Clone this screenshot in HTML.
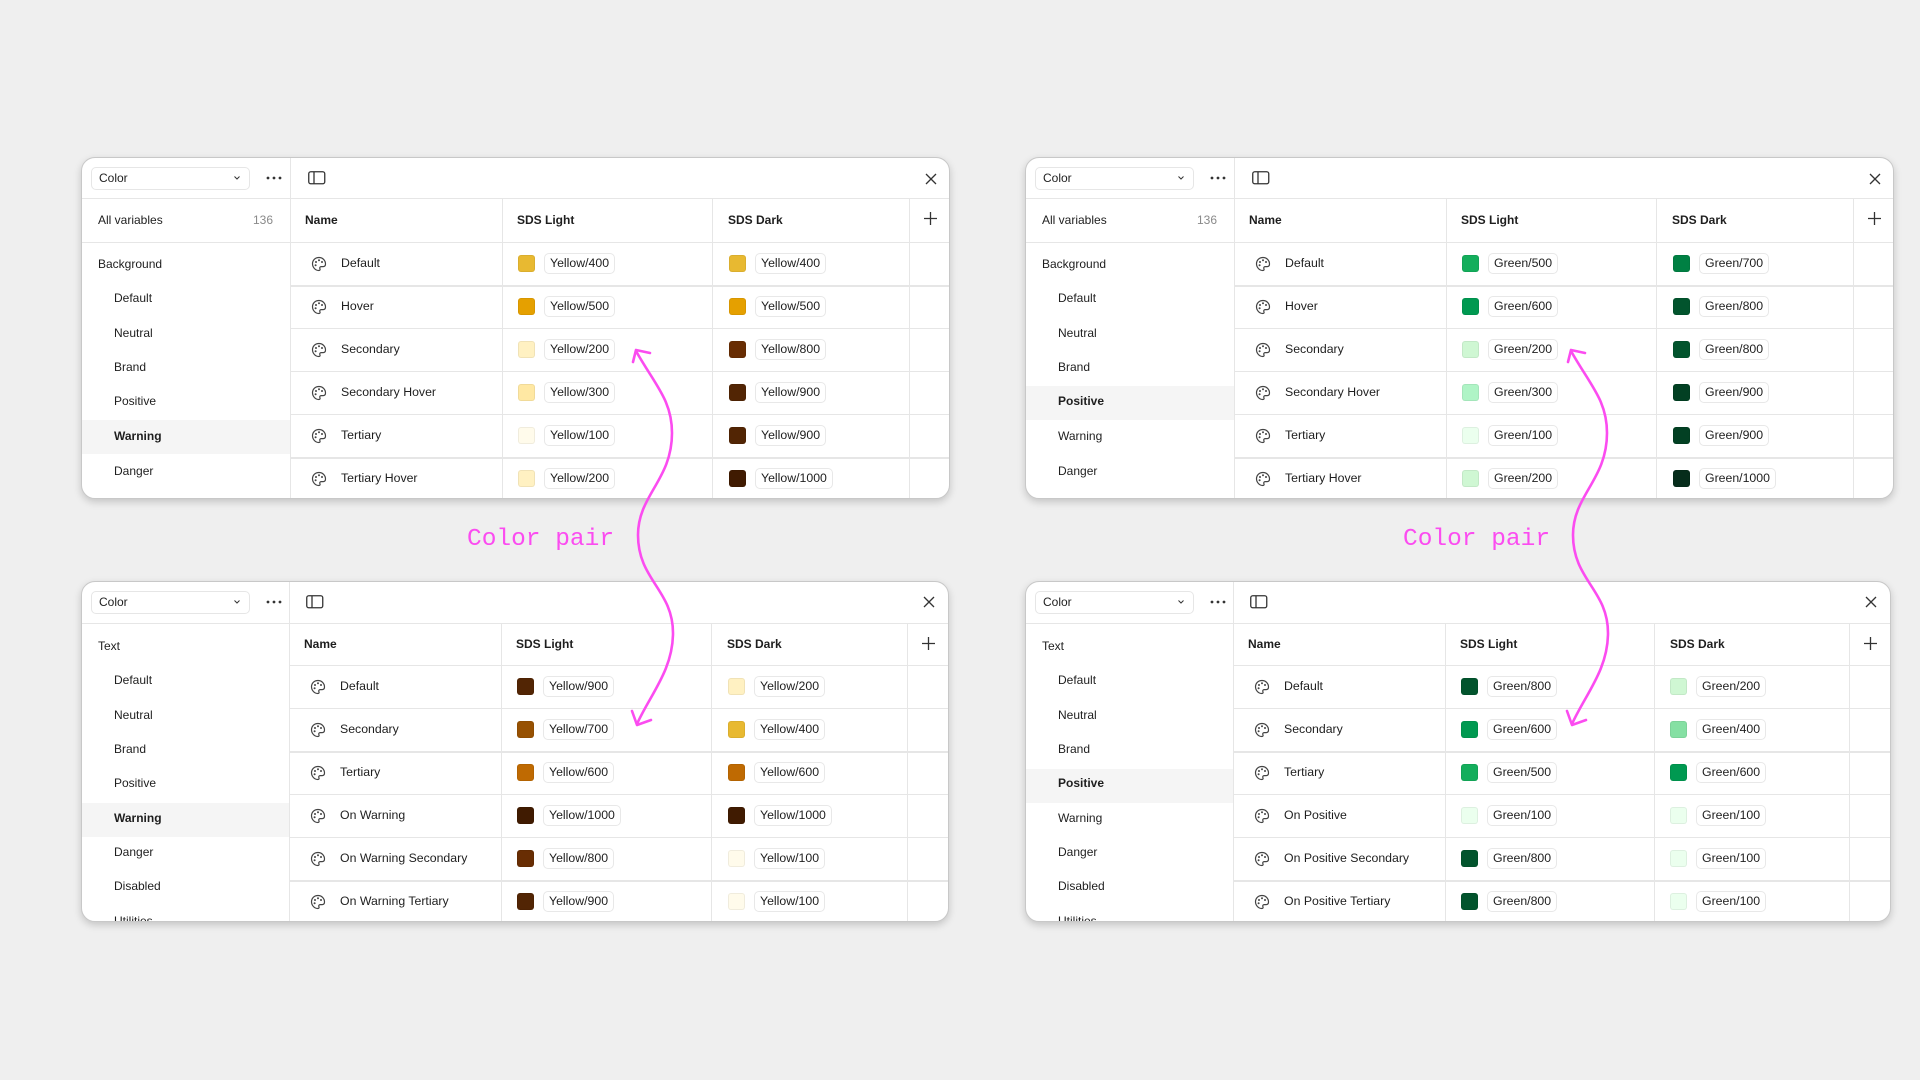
<!DOCTYPE html>
<html><head><meta charset="utf-8">
<style>
*{box-sizing:border-box;margin:0;padding:0}
body{width:1920px;height:1080px;background:#efefef;position:relative;overflow:hidden;font-family:"Liberation Sans",sans-serif;color:#1e1e1e}
.p{position:absolute;width:869px;height:342px;background:#fff;border:1px solid #c8c8c8;border-radius:14px;box-shadow:0 3px 8px rgba(0,0,0,.18);overflow:hidden}
.a{position:absolute}
.hl{position:absolute;left:0;right:0;height:1px;background:#e6e6e6}
.vl{position:absolute;width:1px;background:#e6e6e6}
.dd{position:absolute;left:9px;top:9px;width:159px;height:23px;border:1px solid #e6e6e6;border-radius:5px;font-size:12px;line-height:21px;padding-left:7px}
.dd svg{position:absolute;right:9px;top:8px}
.side{position:absolute;font-size:12px;line-height:14px}
.sel{position:absolute;left:0;width:208px;height:34px;background:#f5f5f5}
.th{position:absolute;font-size:12px;font-weight:bold;line-height:14px}
.row{position:absolute;left:208px;width:661px;height:43px}
.row .ic{position:absolute;left:21px;top:14px}
.row .nm{position:absolute;left:51px;top:14px;font-size:12.3px;line-height:15px}
.sw{position:absolute;top:13px;width:17px;height:17px;border-radius:3px;box-shadow:inset 0 0 0 1px rgba(0,0,0,.06)}
.chip{position:absolute;top:11px;height:21px;border:1px solid #e8e8e8;border-radius:5px;font-size:12.3px;line-height:19px;padding:0 5px}
.cp{position:absolute;font-family:"Liberation Mono",monospace;font-size:24.5px;color:#fb4cf0;line-height:28px}
</style></head><body>

<svg width="0" height="0" style="position:absolute">
<defs>
<symbol id="pal" viewBox="0 0 16 16"><path d="M8 1.5C4.2 1.5 1.5 4.3 1.5 7.8c0 3.6 2.9 6.7 6.3 6.7 1.2 0 1.6-.8 1.1-1.8-.5-1 .1-2.1 1.3-2.1h1.9c1.5 0 2.4-1 2.4-2.6C14.5 4.4 11.7 1.5 8 1.5z" fill="none" stroke="#444" stroke-width="1.2"/><circle cx="5" cy="6" r="1" fill="#444"/><circle cx="8" cy="4.3" r="1" fill="#444"/><circle cx="11" cy="6" r="1" fill="#444"/><circle cx="4.6" cy="9.3" r="1" fill="#444"/></symbol>
</defs></svg>

<!-- ================= TOP LEFT ================= -->
<div class="p" style="left:81px;top:157px">
 <div class="dd">Color<svg width="6" height="4" viewBox="0 0 6 4"><path d="M.5.5l2.5 2.5L5.5.5" fill="none" stroke="#333" stroke-width="1"/></svg></div>
 <svg class="a" style="left:184px;top:18px" width="16" height="4"><circle cx="2" cy="2" r="1.4" fill="#333"/><circle cx="8" cy="2" r="1.4" fill="#333"/><circle cx="14" cy="2" r="1.4" fill="#333"/></svg>
 <svg class="a" style="left:226px;top:13px" width="18" height="14"><rect x=".75" y=".75" width="16" height="12" rx="2" fill="none" stroke="#333" stroke-width="1.3"/><line x1="6" y1="1" x2="6" y2="13" stroke="#333" stroke-width="1.3"/></svg>
 <svg class="a" style="left:843px;top:15px" width="12" height="12"><path d="M1 1l10 10M11 1L1 11" stroke="#333" stroke-width="1.3"/></svg>
 <div class="hl" style="top:40px"></div>
 <div class="vl" style="left:208px;top:0;height:342px"></div>
 <div class="side" style="left:16px;top:55px">All variables</div>
 <div class="side" style="left:171px;top:55px;color:#8a8a8a">136</div>
 <div class="hl" style="top:84px;width:208px"></div>
 <div class="sel" style="top:262px"></div>
 <div class="side" style="left:16px;top:99px">Background</div>
 <div class="side" style="left:32px;top:133px">Default</div>
 <div class="side" style="left:32px;top:168px">Neutral</div>
 <div class="side" style="left:32px;top:202px">Brand</div>
 <div class="side" style="left:32px;top:236px">Positive</div>
 <div class="side" style="left:32px;top:271px;font-weight:bold">Warning</div>
 <div class="side" style="left:32px;top:306px">Danger</div>
 <div class="th" style="left:223px;top:55px">Name</div>
 <div class="th" style="left:435px;top:55px">SDS Light</div>
 <div class="th" style="left:646px;top:55px">SDS Dark</div>
 <svg class="a" style="left:842px;top:54px" width="13" height="13"><path d="M6.5 0v13M0 6.5h13" stroke="#333" stroke-width="1.3"/></svg>
 <div class="vl" style="left:420px;top:41px;height:301px"></div>
 <div class="vl" style="left:630px;top:41px;height:301px"></div>
 <div class="vl" style="left:827px;top:41px;height:301px"></div>
 <div class="hl" style="top:84px;left:208px"></div>
 <div class="hl" style="top:127px;left:208px;height:2px"></div>
 <div class="hl" style="top:170px;left:208px"></div>
 <div class="hl" style="top:213px;left:208px"></div>
 <div class="hl" style="top:256px;left:208px"></div>
 <div class="hl" style="top:299px;left:208px;height:2px"></div>
 <div class="row" style="top:84px"><svg class="ic" width="16" height="16"><use href="#pal"/></svg><div class="nm">Default</div><div class="sw" style="left:228px;background:#e8b931"></div><div class="chip" style="left:254px">Yellow/400</div><div class="sw" style="left:439px;background:#e8b931"></div><div class="chip" style="left:465px">Yellow/400</div></div>
 <div class="row" style="top:127px"><svg class="ic" width="16" height="16"><use href="#pal"/></svg><div class="nm">Hover</div><div class="sw" style="left:228px;background:#e5a000"></div><div class="chip" style="left:254px">Yellow/500</div><div class="sw" style="left:439px;background:#e5a000"></div><div class="chip" style="left:465px">Yellow/500</div></div>
 <div class="row" style="top:170px"><svg class="ic" width="16" height="16"><use href="#pal"/></svg><div class="nm">Secondary</div><div class="sw" style="left:228px;background:#fff1c2"></div><div class="chip" style="left:254px">Yellow/200</div><div class="sw" style="left:439px;background:#682d03"></div><div class="chip" style="left:465px">Yellow/800</div></div>
 <div class="row" style="top:213px"><svg class="ic" width="16" height="16"><use href="#pal"/></svg><div class="nm">Secondary Hover</div><div class="sw" style="left:228px;background:#ffe8a3"></div><div class="chip" style="left:254px">Yellow/300</div><div class="sw" style="left:439px;background:#522504"></div><div class="chip" style="left:465px">Yellow/900</div></div>
 <div class="row" style="top:256px"><svg class="ic" width="16" height="16"><use href="#pal"/></svg><div class="nm">Tertiary</div><div class="sw" style="left:228px;background:#fffbeb"></div><div class="chip" style="left:254px">Yellow/100</div><div class="sw" style="left:439px;background:#522504"></div><div class="chip" style="left:465px">Yellow/900</div></div>
 <div class="row" style="top:299px"><svg class="ic" width="16" height="16"><use href="#pal"/></svg><div class="nm">Tertiary Hover</div><div class="sw" style="left:228px;background:#fff1c2"></div><div class="chip" style="left:254px">Yellow/200</div><div class="sw" style="left:439px;background:#401b01"></div><div class="chip" style="left:465px">Yellow/1000</div></div>
</div>

<!-- ================= TOP RIGHT ================= -->
<div class="p" style="left:1025px;top:157px">
 <div class="dd">Color<svg width="6" height="4" viewBox="0 0 6 4"><path d="M.5.5l2.5 2.5L5.5.5" fill="none" stroke="#333" stroke-width="1"/></svg></div>
 <svg class="a" style="left:184px;top:18px" width="16" height="4"><circle cx="2" cy="2" r="1.4" fill="#333"/><circle cx="8" cy="2" r="1.4" fill="#333"/><circle cx="14" cy="2" r="1.4" fill="#333"/></svg>
 <svg class="a" style="left:226px;top:13px" width="18" height="14"><rect x=".75" y=".75" width="16" height="12" rx="2" fill="none" stroke="#333" stroke-width="1.3"/><line x1="6" y1="1" x2="6" y2="13" stroke="#333" stroke-width="1.3"/></svg>
 <svg class="a" style="left:843px;top:15px" width="12" height="12"><path d="M1 1l10 10M11 1L1 11" stroke="#333" stroke-width="1.3"/></svg>
 <div class="hl" style="top:40px"></div>
 <div class="vl" style="left:208px;top:0;height:342px"></div>
 <div class="side" style="left:16px;top:55px">All variables</div>
 <div class="side" style="left:171px;top:55px;color:#8a8a8a">136</div>
 <div class="hl" style="top:84px;width:208px"></div>
 <div class="sel" style="top:228px"></div>
 <div class="side" style="left:16px;top:99px">Background</div>
 <div class="side" style="left:32px;top:133px">Default</div>
 <div class="side" style="left:32px;top:168px">Neutral</div>
 <div class="side" style="left:32px;top:202px">Brand</div>
 <div class="side" style="left:32px;top:236px;font-weight:bold">Positive</div>
 <div class="side" style="left:32px;top:271px">Warning</div>
 <div class="side" style="left:32px;top:306px">Danger</div>
 <div class="th" style="left:223px;top:55px">Name</div>
 <div class="th" style="left:435px;top:55px">SDS Light</div>
 <div class="th" style="left:646px;top:55px">SDS Dark</div>
 <svg class="a" style="left:842px;top:54px" width="13" height="13"><path d="M6.5 0v13M0 6.5h13" stroke="#333" stroke-width="1.3"/></svg>
 <div class="vl" style="left:420px;top:41px;height:301px"></div>
 <div class="vl" style="left:630px;top:41px;height:301px"></div>
 <div class="vl" style="left:827px;top:41px;height:301px"></div>
 <div class="hl" style="top:84px;left:208px"></div>
 <div class="hl" style="top:127px;left:208px;height:2px"></div>
 <div class="hl" style="top:170px;left:208px"></div>
 <div class="hl" style="top:213px;left:208px"></div>
 <div class="hl" style="top:256px;left:208px"></div>
 <div class="hl" style="top:299px;left:208px;height:2px"></div>
 <div class="row" style="top:84px"><svg class="ic" width="16" height="16"><use href="#pal"/></svg><div class="nm">Default</div><div class="sw" style="left:228px;background:#14ae5c"></div><div class="chip" style="left:254px">Green/500</div><div class="sw" style="left:439px;background:#008043"></div><div class="chip" style="left:465px">Green/700</div></div>
 <div class="row" style="top:127px"><svg class="ic" width="16" height="16"><use href="#pal"/></svg><div class="nm">Hover</div><div class="sw" style="left:228px;background:#009951"></div><div class="chip" style="left:254px">Green/600</div><div class="sw" style="left:439px;background:#02542d"></div><div class="chip" style="left:465px">Green/800</div></div>
 <div class="row" style="top:170px"><svg class="ic" width="16" height="16"><use href="#pal"/></svg><div class="nm">Secondary</div><div class="sw" style="left:228px;background:#cff7d3"></div><div class="chip" style="left:254px">Green/200</div><div class="sw" style="left:439px;background:#02542d"></div><div class="chip" style="left:465px">Green/800</div></div>
 <div class="row" style="top:213px"><svg class="ic" width="16" height="16"><use href="#pal"/></svg><div class="nm">Secondary Hover</div><div class="sw" style="left:228px;background:#aff4c6"></div><div class="chip" style="left:254px">Green/300</div><div class="sw" style="left:439px;background:#024023"></div><div class="chip" style="left:465px">Green/900</div></div>
 <div class="row" style="top:256px"><svg class="ic" width="16" height="16"><use href="#pal"/></svg><div class="nm">Tertiary</div><div class="sw" style="left:228px;background:#ebffee"></div><div class="chip" style="left:254px">Green/100</div><div class="sw" style="left:439px;background:#024023"></div><div class="chip" style="left:465px">Green/900</div></div>
 <div class="row" style="top:299px"><svg class="ic" width="16" height="16"><use href="#pal"/></svg><div class="nm">Tertiary Hover</div><div class="sw" style="left:228px;background:#cff7d3"></div><div class="chip" style="left:254px">Green/200</div><div class="sw" style="left:439px;background:#062d1b"></div><div class="chip" style="left:465px">Green/1000</div></div>
</div>

<!-- ================= BOTTOM LEFT ================= -->
<div class="p" style="left:81px;top:581px;width:868px;height:341px">
 <div class="dd">Color<svg width="6" height="4" viewBox="0 0 6 4"><path d="M.5.5l2.5 2.5L5.5.5" fill="none" stroke="#333" stroke-width="1"/></svg></div>
 <svg class="a" style="left:184px;top:18px" width="16" height="4"><circle cx="2" cy="2" r="1.4" fill="#333"/><circle cx="8" cy="2" r="1.4" fill="#333"/><circle cx="14" cy="2" r="1.4" fill="#333"/></svg>
 <svg class="a" style="left:224px;top:13px" width="18" height="14"><rect x=".75" y=".75" width="16" height="12" rx="2" fill="none" stroke="#333" stroke-width="1.3"/><line x1="6" y1="1" x2="6" y2="13" stroke="#333" stroke-width="1.3"/></svg>
 <svg class="a" style="left:841px;top:14px" width="12" height="12"><path d="M1 1l10 10M11 1L1 11" stroke="#333" stroke-width="1.3"/></svg>
 <div class="hl" style="top:41px"></div>
 <div class="vl" style="left:207px;top:0;height:342px"></div>
 <div class="sel" style="top:221px;width:207px"></div>
 <div class="side" style="left:16px;top:57px">Text</div>
 <div class="side" style="left:32px;top:91px">Default</div>
 <div class="side" style="left:32px;top:126px">Neutral</div>
 <div class="side" style="left:32px;top:160px">Brand</div>
 <div class="side" style="left:32px;top:194px">Positive</div>
 <div class="side" style="left:32px;top:229px;font-weight:bold">Warning</div>
 <div class="side" style="left:32px;top:263px">Danger</div>
 <div class="side" style="left:32px;top:297px">Disabled</div>
 <div class="side" style="left:32px;top:332px">Utilities</div>
 <div class="th" style="left:222px;top:55px">Name</div>
 <div class="th" style="left:434px;top:55px">SDS Light</div>
 <div class="th" style="left:645px;top:55px">SDS Dark</div>
 <svg class="a" style="left:840px;top:55px" width="13" height="13"><path d="M6.5 0v13M0 6.5h13" stroke="#333" stroke-width="1.3"/></svg>
 <div class="vl" style="left:419px;top:42px;height:300px"></div>
 <div class="vl" style="left:629px;top:42px;height:300px"></div>
 <div class="vl" style="left:825px;top:42px;height:300px"></div>
 <div class="hl" style="top:83px;left:207px"></div>
 <div class="hl" style="top:126px;left:207px"></div>
 <div class="hl" style="top:169px;left:207px;height:2px"></div>
 <div class="hl" style="top:212px;left:207px"></div>
 <div class="hl" style="top:255px;left:207px"></div>
 <div class="hl" style="top:298px;left:207px;height:2px"></div>
 <div class="row" style="top:83px;left:207px"><svg class="ic" width="16" height="16"><use href="#pal"/></svg><div class="nm">Default</div><div class="sw" style="left:228px;background:#522504"></div><div class="chip" style="left:254px">Yellow/900</div><div class="sw" style="left:439px;background:#fff1c2"></div><div class="chip" style="left:465px">Yellow/200</div></div>
 <div class="row" style="top:126px;left:207px"><svg class="ic" width="16" height="16"><use href="#pal"/></svg><div class="nm">Secondary</div><div class="sw" style="left:228px;background:#975102"></div><div class="chip" style="left:254px">Yellow/700</div><div class="sw" style="left:439px;background:#e8b931"></div><div class="chip" style="left:465px">Yellow/400</div></div>
 <div class="row" style="top:169px;left:207px"><svg class="ic" width="16" height="16"><use href="#pal"/></svg><div class="nm">Tertiary</div><div class="sw" style="left:228px;background:#bf6a02"></div><div class="chip" style="left:254px">Yellow/600</div><div class="sw" style="left:439px;background:#bf6a02"></div><div class="chip" style="left:465px">Yellow/600</div></div>
 <div class="row" style="top:212px;left:207px"><svg class="ic" width="16" height="16"><use href="#pal"/></svg><div class="nm">On Warning</div><div class="sw" style="left:228px;background:#401b01"></div><div class="chip" style="left:254px">Yellow/1000</div><div class="sw" style="left:439px;background:#401b01"></div><div class="chip" style="left:465px">Yellow/1000</div></div>
 <div class="row" style="top:255px;left:207px"><svg class="ic" width="16" height="16"><use href="#pal"/></svg><div class="nm">On Warning Secondary</div><div class="sw" style="left:228px;background:#682d03"></div><div class="chip" style="left:254px">Yellow/800</div><div class="sw" style="left:439px;background:#fffbeb"></div><div class="chip" style="left:465px">Yellow/100</div></div>
 <div class="row" style="top:298px;left:207px"><svg class="ic" width="16" height="16"><use href="#pal"/></svg><div class="nm">On Warning Tertiary</div><div class="sw" style="left:228px;background:#522504"></div><div class="chip" style="left:254px">Yellow/900</div><div class="sw" style="left:439px;background:#fffbeb"></div><div class="chip" style="left:465px">Yellow/100</div></div>
</div>

<!-- ================= BOTTOM RIGHT ================= -->
<div class="p" style="left:1025px;top:581px;width:866px;height:341px">
 <div class="dd">Color<svg width="6" height="4" viewBox="0 0 6 4"><path d="M.5.5l2.5 2.5L5.5.5" fill="none" stroke="#333" stroke-width="1"/></svg></div>
 <svg class="a" style="left:184px;top:18px" width="16" height="4"><circle cx="2" cy="2" r="1.4" fill="#333"/><circle cx="8" cy="2" r="1.4" fill="#333"/><circle cx="14" cy="2" r="1.4" fill="#333"/></svg>
 <svg class="a" style="left:224px;top:13px" width="18" height="14"><rect x=".75" y=".75" width="16" height="12" rx="2" fill="none" stroke="#333" stroke-width="1.3"/><line x1="6" y1="1" x2="6" y2="13" stroke="#333" stroke-width="1.3"/></svg>
 <svg class="a" style="left:839px;top:14px" width="12" height="12"><path d="M1 1l10 10M11 1L1 11" stroke="#333" stroke-width="1.3"/></svg>
 <div class="hl" style="top:41px"></div>
 <div class="vl" style="left:207px;top:0;height:342px"></div>
 <div class="sel" style="top:187px;width:207px"></div>
 <div class="side" style="left:16px;top:57px">Text</div>
 <div class="side" style="left:32px;top:91px">Default</div>
 <div class="side" style="left:32px;top:126px">Neutral</div>
 <div class="side" style="left:32px;top:160px">Brand</div>
 <div class="side" style="left:32px;top:194px;font-weight:bold">Positive</div>
 <div class="side" style="left:32px;top:229px">Warning</div>
 <div class="side" style="left:32px;top:263px">Danger</div>
 <div class="side" style="left:32px;top:297px">Disabled</div>
 <div class="side" style="left:32px;top:332px">Utilities</div>
 <div class="th" style="left:222px;top:55px">Name</div>
 <div class="th" style="left:434px;top:55px">SDS Light</div>
 <div class="th" style="left:644px;top:55px">SDS Dark</div>
 <svg class="a" style="left:838px;top:55px" width="13" height="13"><path d="M6.5 0v13M0 6.5h13" stroke="#333" stroke-width="1.3"/></svg>
 <div class="vl" style="left:419px;top:42px;height:300px"></div>
 <div class="vl" style="left:628px;top:42px;height:300px"></div>
 <div class="vl" style="left:823px;top:42px;height:300px"></div>
 <div class="hl" style="top:83px;left:207px"></div>
 <div class="hl" style="top:126px;left:207px"></div>
 <div class="hl" style="top:169px;left:207px;height:2px"></div>
 <div class="hl" style="top:212px;left:207px"></div>
 <div class="hl" style="top:255px;left:207px"></div>
 <div class="hl" style="top:298px;left:207px;height:2px"></div>
 <div class="row" style="top:83px;left:207px"><svg class="ic" width="16" height="16"><use href="#pal"/></svg><div class="nm">Default</div><div class="sw" style="left:228px;background:#02542d"></div><div class="chip" style="left:254px">Green/800</div><div class="sw" style="left:437px;background:#cff7d3"></div><div class="chip" style="left:463px">Green/200</div></div>
 <div class="row" style="top:126px;left:207px"><svg class="ic" width="16" height="16"><use href="#pal"/></svg><div class="nm">Secondary</div><div class="sw" style="left:228px;background:#009951"></div><div class="chip" style="left:254px">Green/600</div><div class="sw" style="left:437px;background:#85e0a3"></div><div class="chip" style="left:463px">Green/400</div></div>
 <div class="row" style="top:169px;left:207px"><svg class="ic" width="16" height="16"><use href="#pal"/></svg><div class="nm">Tertiary</div><div class="sw" style="left:228px;background:#14ae5c"></div><div class="chip" style="left:254px">Green/500</div><div class="sw" style="left:437px;background:#009951"></div><div class="chip" style="left:463px">Green/600</div></div>
 <div class="row" style="top:212px;left:207px"><svg class="ic" width="16" height="16"><use href="#pal"/></svg><div class="nm">On Positive</div><div class="sw" style="left:228px;background:#ebffee"></div><div class="chip" style="left:254px">Green/100</div><div class="sw" style="left:437px;background:#ebffee"></div><div class="chip" style="left:463px">Green/100</div></div>
 <div class="row" style="top:255px;left:207px"><svg class="ic" width="16" height="16"><use href="#pal"/></svg><div class="nm">On Positive Secondary</div><div class="sw" style="left:228px;background:#02542d"></div><div class="chip" style="left:254px">Green/800</div><div class="sw" style="left:437px;background:#ebffee"></div><div class="chip" style="left:463px">Green/100</div></div>
 <div class="row" style="top:298px;left:207px"><svg class="ic" width="16" height="16"><use href="#pal"/></svg><div class="nm">On Positive Tertiary</div><div class="sw" style="left:228px;background:#02542d"></div><div class="chip" style="left:254px">Green/800</div><div class="sw" style="left:437px;background:#ebffee"></div><div class="chip" style="left:463px">Green/100</div></div>
</div>

<!-- labels & arrows -->
<div class="cp" style="left:467px;top:526px">Color pair</div>
<div class="cp" style="left:1403px;top:526px">Color pair</div>
<svg class="a" style="left:0;top:0" width="1920" height="1080">
 <g fill="none" stroke="#fb4cf0" stroke-width="2.6" stroke-linecap="round" stroke-linejoin="round">
  <path d="M1571,351 C1590,385 1607,400 1607,433 C1607,480 1573,495 1573,535 C1573,580 1608,590 1608,633 C1608,670 1585,695 1572,724"/>
  <path d="M1568,362 L1571,350 L1585,353"/>
  <path d="M1567,711 L1572,725 L1586,720"/>
 </g>
 <g transform="translate(-935,0)" fill="none" stroke="#fb4cf0" stroke-width="2.6" stroke-linecap="round" stroke-linejoin="round">
  <path d="M1571,351 C1590,385 1607,400 1607,433 C1607,480 1573,495 1573,535 C1573,580 1608,590 1608,633 C1608,670 1585,695 1572,724"/>
  <path d="M1568,362 L1571,350 L1585,353"/>
  <path d="M1567,711 L1572,725 L1586,720"/>
 </g>
</svg>
</body></html>
